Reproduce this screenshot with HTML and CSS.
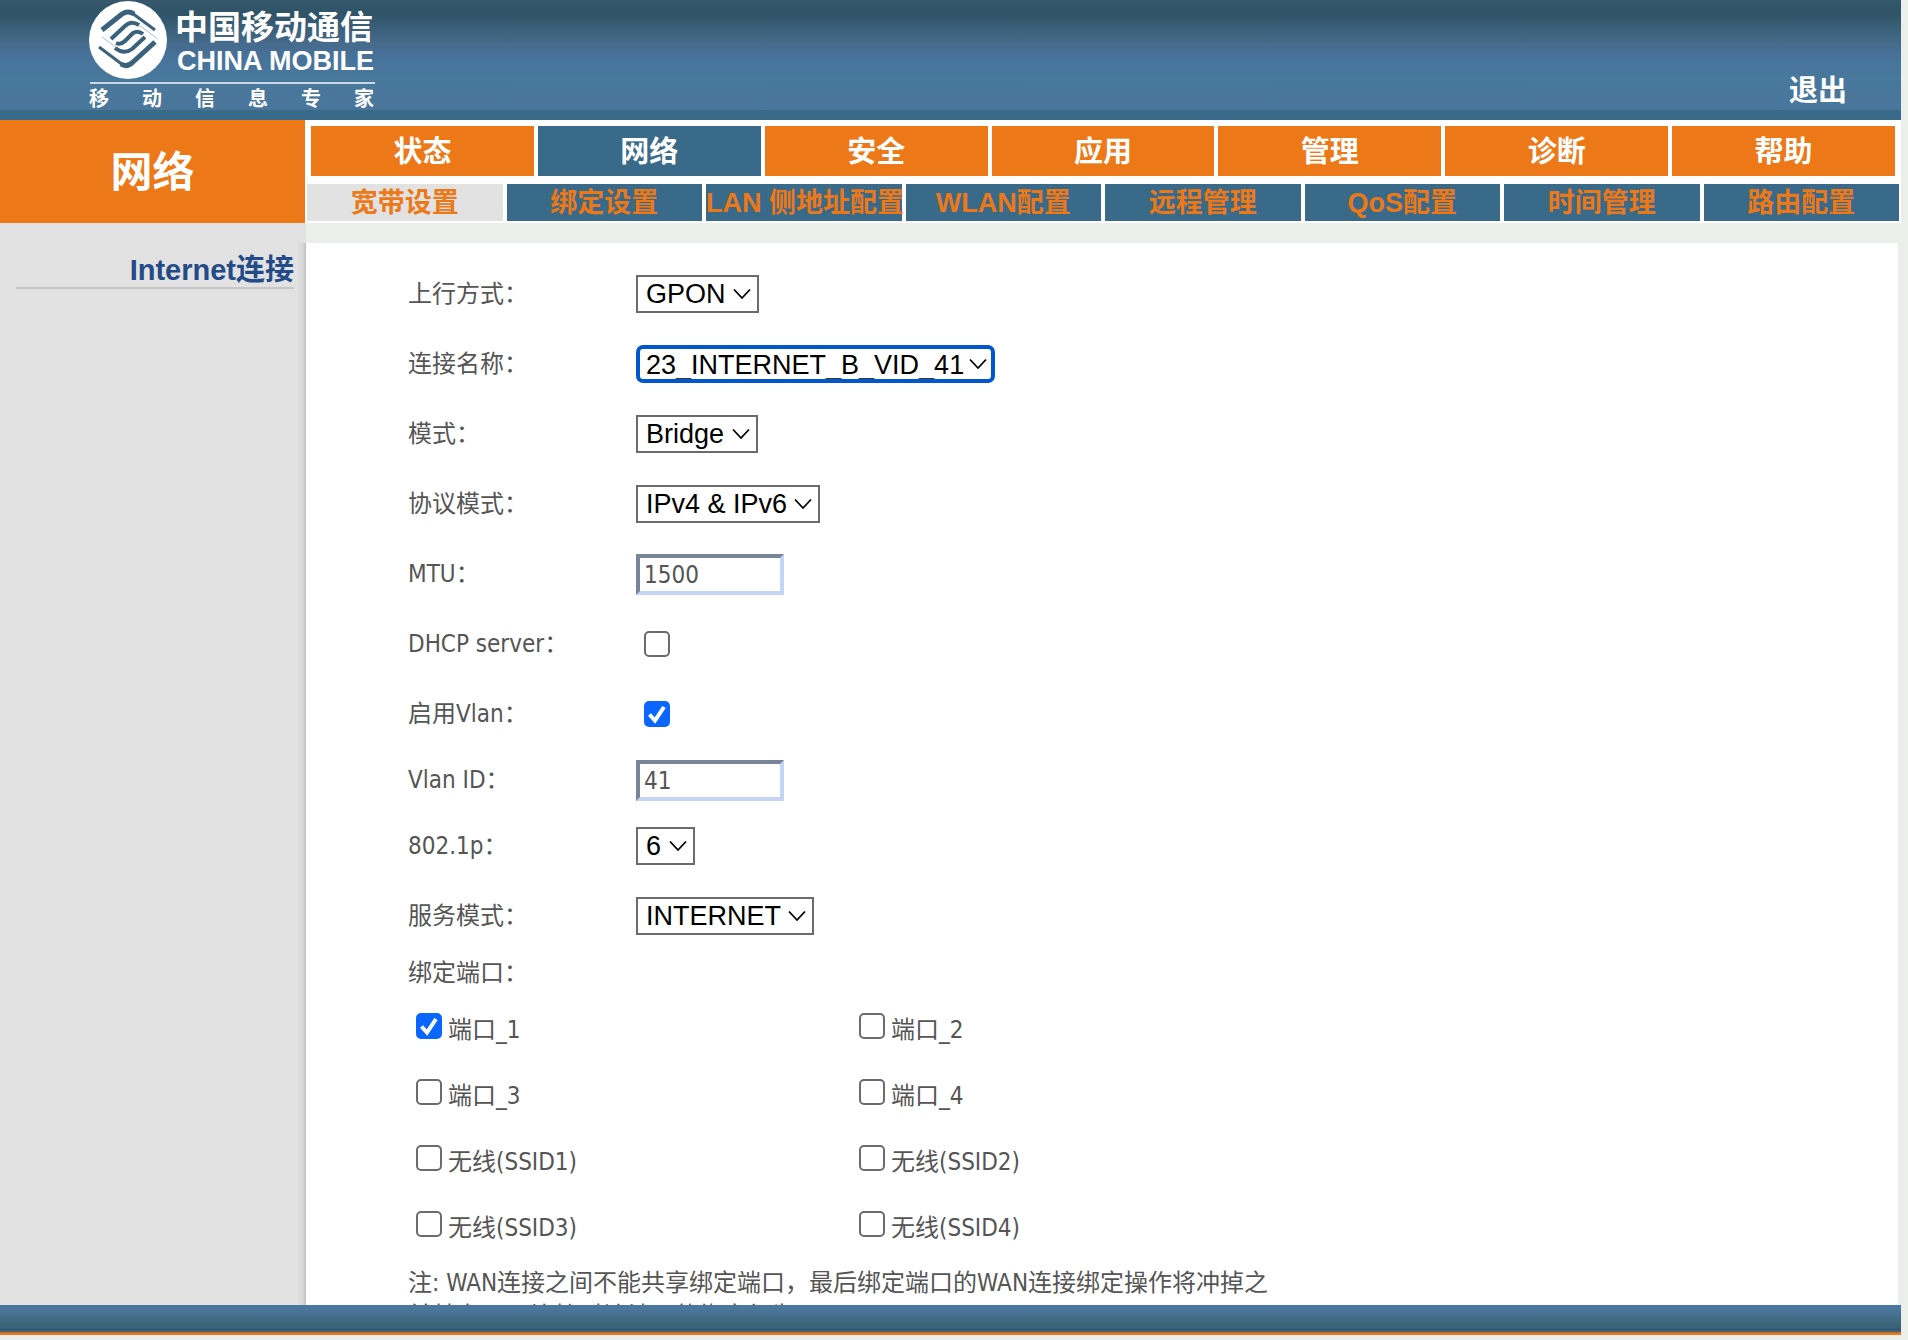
FILE: index.html
```html
<!DOCTYPE html>
<html lang="zh-CN">
<head>
<meta charset="utf-8">
<title>网络</title>
<link rel="stylesheet" href="styles.css">
</head>
<body>
<div class="page">
  <header class="header">
    <svg class="logo" width="292" height="110" viewBox="0 0 292 110" role="img" aria-label="中国移动通信 CHINA MOBILE">
      <circle cx="40" cy="40" r="39" fill="#fff"/>
      <g fill="none" stroke="#3a627c" stroke-linejoin="round">
        <path stroke-width="5" d="M14 30 L34 14 Q40 10 46 14"/>
        <path stroke-width="3" d="M44 13 L67 30"/>
        <path stroke-width="4" d="M23 39 L37 26 Q43 20 51 25"/>
        <path stroke-width="1" stroke="#a9bfd0" d="M51 25 L70 39 M14 37 L33 51"/>
        <path stroke-width="4" d="M28 43 Q33 45 37 41 L45 33 Q50 30 55 34"/>
        <path stroke-width="4" d="M27 48 Q36 55 44 49 L57 37"/>
        <path stroke-width="3" d="M11 47 L35 65"/>
        <path stroke-width="5" d="M33 64 Q39 68 45 62 L67 42"/>
      </g>
      <text class="logo-cn" x="87" y="39">中国移动通信</text>
      <text class="logo-en" x="89" y="70">CHINA MOBILE</text>
      <rect x="2" y="82" width="285" height="2" fill="#c9d9e6"/>
      <g class="logo-tag">
        <text x="1" y="106">移</text><text x="54" y="106">动</text><text x="107" y="106">信</text>
        <text x="160" y="106">息</text><text x="213" y="106">专</text><text x="266" y="106">家</text>
      </g>
    </svg>
    <a class="logout" href="#">退出</a>
  </header>

  <div class="navbar">
    <h1 class="section-title">网络</h1>
    <div class="menus">
      <nav class="tabs">
        <a href="#">状态</a><a class="active" href="#">网络</a><a href="#">安全</a><a href="#">应用</a><a href="#">管理</a><a href="#">诊断</a><a href="#">帮助</a>
      </nav>
      <nav class="subtabs">
        <a class="active" href="#">宽带设置</a><a href="#">绑定设置</a><a href="#">LAN 侧地址配置</a><a href="#">WLAN配置</a><a href="#">远程管理</a><a href="#">QoS配置</a><a href="#">时间管理</a><a href="#">路由配置</a>
      </nav>
    </div>
  </div>

  <div class="body">
    <aside class="sidebar">
      <a class="side-link" href="#">Internet连接</a>
    </aside>
    <main class="content">
      <form class="form">
        <div class="row"><label for="uplink">上行方式：</label><select id="uplink" class="w-gpon"><option>GPON</option></select></div>
        <div class="row"><label for="conn">连接名称：</label><select id="conn" class="w-conn focused"><option>23_INTERNET_B_VID_41</option></select></div>
        <div class="row"><label for="mode">模式：</label><select id="mode" class="w-mode"><option>Bridge</option></select></div>
        <div class="row"><label for="proto">协议模式：</label><select id="proto" class="w-proto"><option>IPv4 &amp; IPv6</option></select></div>
        <div class="row"><label for="mtu">MTU：</label><input id="mtu" class="text" type="text" value="1500"></div>
        <div class="row"><label for="dhcp">DHCP server：</label><input id="dhcp" class="check" type="checkbox"></div>
        <div class="row"><label for="vlan">启用Vlan：</label><input id="vlan" class="check" type="checkbox" checked></div>
        <div class="row row-short"><label for="vlanid">Vlan ID：</label><input id="vlanid" class="text" type="text" value="41"></div>
        <div class="row"><label for="prio">802.1p：</label><select id="prio" class="w-prio"><option>6</option></select></div>
        <div class="row"><label for="service">服务模式：</label><select id="service" class="w-service"><option>INTERNET</option></select></div>
        <div class="row row-head">绑定端口：</div>
        <div class="ports">
          <label><input class="check" type="checkbox" checked><span>端口_1</span></label>
          <label><input class="check" type="checkbox"><span>端口_2</span></label>
          <label><input class="check" type="checkbox"><span>端口_3</span></label>
          <label><input class="check" type="checkbox"><span>端口_4</span></label>
          <label><input class="check" type="checkbox"><span>无线(SSID1)</span></label>
          <label><input class="check" type="checkbox"><span>无线(SSID2)</span></label>
          <label><input class="check" type="checkbox"><span>无线(SSID3)</span></label>
          <label><input class="check" type="checkbox"><span>无线(SSID4)</span></label>
        </div>
        <p class="note">注: WAN连接之间不能共享绑定端口，最后绑定端口的WAN连接绑定操作将冲掉之前其它WAN连接对该端口的绑定行为</p>
      </form>
    </main>
  </div>

  <footer class="footer"></footer>
</div>
</body>
</html>
```

FILE: styles.css
```css
* { box-sizing: border-box; }

:root {
  --orange: #ec7817;
  --blue: #3a6a8a;
  --page: #eceeeb;
  --side: #e2e2e2;
  --side-width: 306px;
}

body {
  margin: 0;
  background: var(--page);
  color: #555;
  font: 24px/33px "DejaVu Sans Condensed", "Noto Sans CJK SC", sans-serif;
}

a { text-decoration: none; }

.page {
  height: 100vh;
  padding: 0 7px 5px 0;
  display: flex;
  flex-direction: column;
}

/* Header */
.header {
  flex: none;
  height: 120px;
  padding: 0 54px 0 88px;
  display: flex;
  justify-content: space-between;
  align-items: flex-end;
  border-bottom: 10px solid var(--blue);
  background: linear-gradient(#34576c 0, #2f5367 14px, #3c617b 30px, #466b8c 44px, #47739b 58px, #48789c 78px, #4a769c 100%);
}
.logo { display: block; fill: #fff; }
.logo-cn { font: bold 33px "Liberation Sans", "Noto Sans CJK SC", sans-serif; }
.logo-en { font: bold 27px "Liberation Sans", sans-serif; }
.logo-tag { font: bold 20px "Liberation Sans", "Noto Sans CJK SC", sans-serif; }
.logout {
  color: #fff;
  font: bold 29px/38px "Liberation Sans", "Noto Sans CJK SC", sans-serif;
}

/* Navigation */
.navbar {
  flex: none;
  display: flex;
  background: #fff;
  font-family: "Liberation Sans", "Noto Sans CJK SC", sans-serif;
}
.section-title {
  flex: none;
  width: calc(var(--side-width) - 1px);
  margin: 0;
  padding-top: 2px;
  display: flex;
  align-items: center;
  justify-content: center;
  background: var(--orange);
  color: #fff;
  font-size: 42px;
}
.menus { flex: 1; min-width: 0; padding: 6px 2px 2px; }
.tabs, .subtabs { display: flex; gap: 4px; }
.tabs { padding: 0 4px; margin-bottom: 8px; }
.tabs a, .subtabs a {
  flex: 1 1 0;
  min-width: 0;
  padding-top: 2px;
  text-align: center;
  white-space: nowrap;
  font-weight: bold;
}
.tabs a { background: var(--orange); color: #fff; font-size: 29px; line-height: 48px; }
.tabs .active { background: var(--blue); }
.subtabs a { background: var(--blue); color: var(--orange); font-size: 27px; line-height: 35px; }
.subtabs .active { background: var(--side); }

/* Body */
.body { flex: 1; min-height: 0; display: flex; }
.sidebar {
  flex: none;
  width: var(--side-width);
  padding: 30px 12px 0 16px;
  background: linear-gradient(to left, #bdbdbd, #d6d6d6 3px, var(--side) 9px) 0 20px no-repeat var(--side);
}
.side-link {
  display: block;
  border-bottom: 2px solid #c6c6c6;
  color: #234b87;
  text-align: right;
  font: bold 29px/34px "Liberation Sans", "Noto Sans CJK SC", sans-serif;
}
.content {
  flex: 1;
  min-width: 0;
  margin: 20px 3px 0 0;
  padding: 16px 0 0 102px;
  overflow-y: auto;
  scrollbar-width: none;
  background: #fff;
}

/* Form */
.row { height: 70px; display: grid; grid-template-columns: 228px auto; align-items: center; justify-content: start; }
.row-short { height: 62px; }
.row-head { height: 44px; }

select {
  appearance: none;
  height: 38px;
  padding: 0 8px;
  border: 2px solid #6b6b6b;
  border-radius: 0;
  background: #fff url("data:image/svg+xml,%3Csvg xmlns='http://www.w3.org/2000/svg' width='18' height='12'%3E%3Cpath d='M1 1.5 9 10 17 1.5' fill='none' stroke='%23000' stroke-width='1.8'/%3E%3C/svg%3E") no-repeat right 6px center;
  color: #000;
  font: 27px/32px "Liberation Sans", sans-serif;
}
.focused { border: 4px solid #0057cc; border-radius: 7px; padding: 0 6px; background-position: right 4px center; outline: none; }
.w-gpon { width: 123px; }
.w-conn { width: 359px; }
.w-mode { width: 122px; }
.w-proto { width: 184px; }
.w-prio { width: 59px; }
.w-service { width: 178px; }

.text {
  width: 148px;
  height: 41px;
  padding: 2px 4px 0;
  border: 4px solid;
  border-color: #788599 #c3d4f5 #c3d4f5 #788599;
  background: #fff;
  color: #555;
  font: inherit;
}

.check {
  appearance: none;
  width: 26px;
  height: 26px;
  margin: 0 0 0 8px;
  border: 2px solid #6b6b6b;
  border-radius: 5px;
  background: #fff;
}
.check:checked {
  border-color: #0a66ff;
  background: #0a66ff url("data:image/svg+xml,%3Csvg xmlns='http://www.w3.org/2000/svg' width='22' height='22'%3E%3Cpath d='M3.500 11.500 9 17.500 18 4' fill='none' stroke='%23fff' stroke-width='4'/%3E%3C/svg%3E") center no-repeat;
}

.ports { display: grid; grid-template-columns: 443px 443px; grid-auto-rows: 66px; }
.ports label { display: flex; align-items: center; gap: 6px; }
.ports .check { margin-bottom: 4px; }
.ports span { padding-top: 4px; }

.note { max-width: 880px; margin: 8px 0 0; }

/* Footer */
.footer {
  flex: none;
  height: 30px;
  background: linear-gradient(#48789f, #4a769c 5px, #3c6374 20px, #3c6374 22px, #2f5a80 24px, #2f5a80 25px, #6b6a50 27px, var(--orange) 28px);
}
```
